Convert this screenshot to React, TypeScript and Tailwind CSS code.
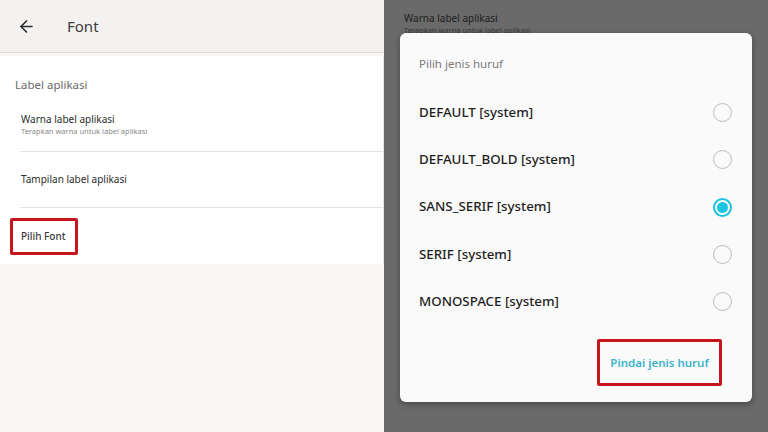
import { ArrowLeft } from "lucide-react";

const fonts = [
  { name: "DEFAULT [system]", selected: false },
  { name: "DEFAULT_BOLD [system]", selected: false },
  { name: "SANS_SERIF [system]", selected: true },
  { name: "SERIF [system]", selected: false },
  { name: "MONOSPACE [system]", selected: false },
];

function Radio({ checked }: { checked: boolean }) {
  if (checked) {
    return (
      <div className="w-[19px] h-[19px] rounded-full border-[2px] border-[#1cc4e4] flex items-center justify-center">
        <div className="w-[11px] h-[11px] rounded-full bg-[#1cc4e4]" />
      </div>
    );
  }
  return <div className="w-[19px] h-[19px] rounded-full border-[1.5px] border-[#bdbdbd]" />;
}

export default function App() {
  return (
    <div
      className="w-[768px] h-[432px] flex overflow-hidden"
      style={{ fontFamily: '"Noto Sans", "Open Sans", sans-serif' }}
    >
      {/* left: settings screen */}
      <div className="w-[384px] h-full bg-[#f7f6f5] flex flex-col">
        <div className="h-[53px] bg-[#f3f2f1] border-b border-[#dddcdb] flex items-center">
          <ArrowLeft size={19} strokeWidth={2} className="ml-[17px] text-[#2a2a2a]" />
          <span className="ml-[31px] text-[15px] text-[#3c3c3c]">Font</span>
        </div>
        <div className="mt-[3px] bg-white border-r border-[#e6e6e6] flex flex-col">
          <div className="pl-[15px] pt-[21px] h-[44px] text-[11.5px] text-[#6a6a6a] leading-[16px]">
            Label aplikasi
          </div>
          <div className="ml-[20px] h-[52px] border-b border-[#e4e4e4] flex flex-col justify-center pb-[2px]">
            <span className="pl-[1px] text-[10px] leading-[14px] text-[#2c2c2c]">Warna label aplikasi</span>
            <span className="pl-[1px] text-[7.5px] leading-[11px] text-[#8a8a8a]">Terapkan warna untuk label aplikasi</span>
          </div>
          <div className="ml-[20px] h-[56px] border-b border-[#e4e4e4] flex items-center">
            <span className="pl-[1px] text-[10px] text-[#2c2c2c]">Tampilan label aplikasi</span>
          </div>
          <div className="h-[56px] flex items-center pl-[10px]">
            <div className="w-[68px] h-[37px] border-[3px] border-[#c4161c] rounded-[2px] flex items-center pl-[8px]">
              <span className="text-[10px] font-medium text-[#3a3a3a]">Pilih Font</span>
            </div>
          </div>
        </div>
      </div>

      {/* right: dialog over dimmed screen */}
      <div className="flex-1 h-full bg-[#6a6a6a] flex flex-col">
        <div className="h-[35px] pl-[20px] pt-[11px] flex flex-col">
          <span className="text-[10px] leading-[14px] text-[#1c1c1c]">Warna label aplikasi</span>
          <span className="text-[7.5px] leading-[10px] text-[#3a3a3a] underline">Terapkan warna untuk label aplikasi</span>
        </div>
        <div className="relative -mt-[2px] ml-[16px] w-[352px] h-[369px] bg-[#fafafa] rounded-[6px] shadow-[0_2px_6px_rgba(0,0,0,0.35)] flex flex-col">
          <div className="pl-[19px] pt-[22px] text-[11.5px] leading-[18px] text-[#7a7a7a]">Pilih jenis huruf</div>
          <div className="mt-[16px] flex flex-col">
            {fonts.map((f) => (
              <div key={f.name} className="h-[47.3px] flex items-center justify-between pl-[19px] pr-[20px]">
                <span className="text-[13.3px] font-medium text-[#1e1e1e]">{f.name}</span>
                <Radio checked={f.selected} />
              </div>
            ))}
          </div>
          <div className="mt-[14px] flex justify-end pr-[30px]">
            <div className="w-[125px] h-[47px] border-[3px] border-[#c4161c] rounded-[2px] flex items-center justify-center">
              <span className="text-[11.5px] font-semibold text-[#3ab4cc]">Pindai jenis huruf</span>
            </div>
          </div>
        </div>
      </div>
    </div>
  );
}
